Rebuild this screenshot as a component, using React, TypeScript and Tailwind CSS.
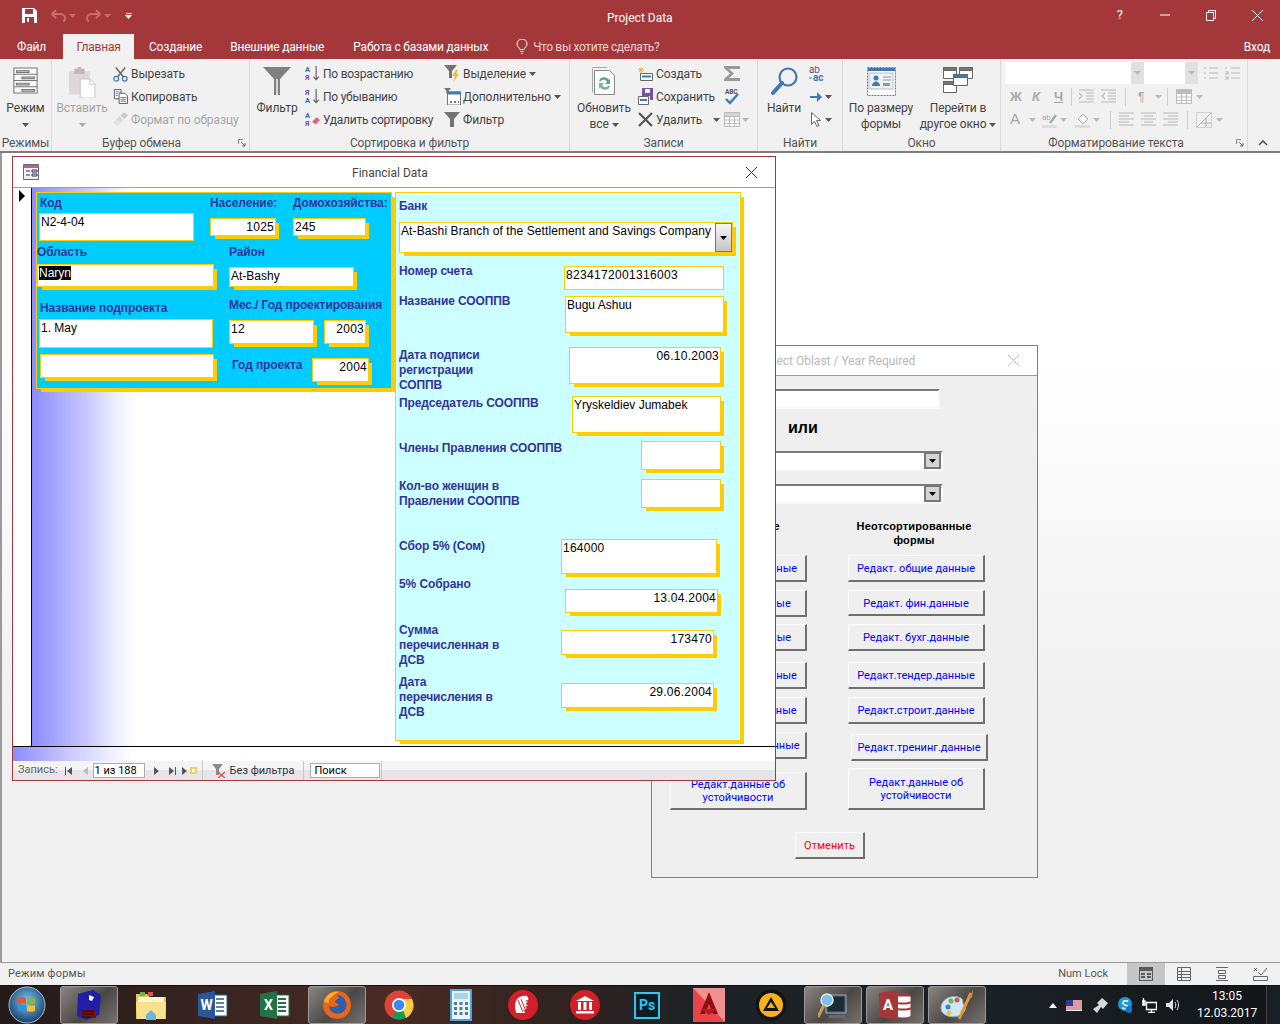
import React from "react";

const SANS = "font-['Roboto',sans-serif]";
const ARIAL = "font-['Liberation_Sans',sans-serif]";

const Caret = ({ c = "#555", cls = "" }: { c?: string; cls?: string }) => (
  <svg width="7" height="4" viewBox="0 0 7 4" className={"inline-block shrink-0 " + cls}>
    <path d="M0 0h7L3.5 4z" fill={c} />
  </svg>
);

/* ribbon icons */
const SaveIcon = () => (
  <svg width="15" height="15" viewBox="0 0 15 15"><path d="M0 0h12l3 3v12H0z" fill="#fff" /><path d="M3 1h8v5H3z" fill="#a4373a" /><path d="M3 9h9v6H3z" fill="#a4373a" /><path d="M5 10h2v4H5z" fill="#fff" /></svg>
);
const UndoIcon = ({ flip = false }: { flip?: boolean }) => (
  <svg width="15" height="13" viewBox="0 0 15 13" style={flip ? { transform: "scaleX(-1)" } : undefined}><path d="M5 1 1 5l4 4M1 5h8c3 0 5 2 5 4s-1 3-2 3" fill="none" stroke="#c26d6f" strokeWidth="2" /></svg>
);
const ModeIcon = () => (
  <svg width="25" height="27" viewBox="0 0 28 30" fill="none" stroke="#777" strokeWidth="1.2"><path d="M1 1h26v28H1z" fill="#fbfbfb" /><path d="M1 8h26M1 15h26M1 22h26" /><path d="M4 4h14v2H4zM10 11h14v2H10zM4 18h14v2H4zM10 25h14v2H10z" fill="#c8c8c8" /></svg>
);
const PasteIcon = () => (
  <svg width="28" height="31" viewBox="0 0 32 36"><path d="M1 5h24v27H1z" fill="#dcd7d8" /><path d="M7 2h12v6H7z" fill="#bdb8b9" /><path d="M11 0h4v3h-4z" fill="#bdb8b9" /><path d="M14 14h11l6 6v16H14z" fill="#fff" stroke="#c4c4c4" /><path d="M25 14v6h6" fill="none" stroke="#c4c4c4" /></svg>
);
const CutIcon = () => (
  <svg width="15" height="16" viewBox="0 0 16 16" fill="none"><path d="M3 1l8 10M13 1 5 11" stroke="#666" strokeWidth="1.5" /><circle cx="3.5" cy="13" r="2.5" stroke="#3f78b5" strokeWidth="1.3" /><circle cx="12.5" cy="13" r="2.5" stroke="#3f78b5" strokeWidth="1.3" /></svg>
);
const CopyIcon = () => (
  <svg width="15" height="15" viewBox="0 0 16 16" fill="#fff" stroke="#555"><path d="M1.5 .5h7v10h-7z" /><path d="M6.5 4.5h6l3 3v8h-9z" /><path d="M3 3h4M3 5h2M3 7h2M8 9h6M8 11h6M8 13h6" stroke="#3f78b5" /></svg>
);
const BrushIcon = () => (
  <svg width="15" height="15" viewBox="0 0 16 15"><path d="m8 3 4-3 4 3-4 4z" fill="#c9c9c9" /><path d="M7 4l4 4-3 3-4-4z" fill="#d8d8d8" /><path d="M4 7l4 4-3 4-5-4z" fill="#e2e2e2" /></svg>
);
const FunnelBig = () => (
  <svg width="28" height="28" viewBox="0 0 28 28"><path d="M0 0h28L17 12v16h-6V12z" fill="#808080" /><path d="M13 12h2v16h-2z" fill="#d6d6d6" /></svg>
);
const FunnelSmall = () => (
  <svg width="16" height="15" viewBox="0 0 16 15"><path d="M0 0h16l-6 7v8H6V7z" fill="#737373" /></svg>
);
const SortIcon = ({ down = false, erase = false }: { down?: boolean; erase?: boolean }) => (
  <svg width="16" height="17" viewBox="0 0 18 19">
    <text x="0" y="8" fontSize="8.5" fontWeight="700" fontFamily="Roboto" fill={down ? "#7a4fa8" : "#2f6eab"}>{down ? "Я" : "А"}</text>
    <text x="0" y="17" fontSize="8.5" fontWeight="700" fontFamily="Roboto" fill={down ? "#2f6eab" : "#7a4fa8"}>{down ? "А" : "Я"}</text>
    {erase ? <path d="m8 12 5-5 4 3-5 5z" fill="#e0607e" /> : <path d="M12.5 1v15M9.5 13l3 3.5 3-3.5" fill="none" stroke="#555" strokeWidth="1.2" />}
  </svg>
);
const HighlightIcon = () => (
  <svg width="16" height="17" viewBox="0 0 16 17"><path d="M0 0h13l-5 6v7H5V6z" fill="#737373" /><path d="m12 5-4 6h3l-2 6 6-8h-3l2-4z" fill="#f0b840" /></svg>
);
const AdvancedIcon = () => (
  <svg width="17" height="17" viewBox="0 0 17 17"><path d="M0 0h7L4.500 3v3h-2V3z" fill="#737373" /><path d="M3.500 4h13v13h-13z" fill="#fff" stroke="#777" /><path d="M3 3.500h14v3H3z" fill="#3f78b5" /><path d="M6 13h2v2H6zM10 13h2v2h-2zM14 13h1v2h-1z" fill="#777" /></svg>
);
const RefreshIcon = () => (
  <svg width="25" height="29" viewBox="0 0 25 29"><path d="M2.500 3.500h15l5 5v19h-20z" fill="#fff" stroke="#888" /><path d="M.5 1.500v24M.5.500h15" stroke="#aaa" fill="none" /><path d="M7 14a5.500 5.500 0 0 1 10-1l1-2v6h-5l2-2a3.500 3.500 0 0 0-6-1z" fill="#5fa783" /><path d="M18 19a5.500 5.500 0 0 1-10 1l-1 2v-6h5l-2 2a3.500 3.500 0 0 0 6 1z" fill="#6fb595" /></svg>
);
const NewRecIcon = () => (
  <svg width="15" height="14" viewBox="0 0 15 14"><path d="M2.500 6.500h12v7h-12z" fill="#fff" stroke="#666" /><path d="M4 8.500h9v2H4z" fill="#3f78b5" /><path d="M3 0v6M0 3h6M1 1l4 4M5 1 1 5" stroke="#e9b648" /></svg>
);
const SaveRecIcon = () => (
  <svg width="15" height="17" viewBox="0 0 15 17"><path d="M4 0h11v12H4z" fill="#7a4fa8" /><path d="M7 1h5v4H7zM7 8h5v4H7z" fill="#fff" /><path d="M.5 8.500h10v8H.5z" fill="#fff" stroke="#666" /><path d="M2 11h7v2H2z" fill="#3f78b5" /></svg>
);
const XIcon = () => (
  <svg width="15" height="15" viewBox="0 0 15 15"><path d="M1 1l13 13M14 1 1 14" stroke="#555" strokeWidth="2.200" /></svg>
);
const SigmaIcon = () => (
  <svg width="16" height="15" viewBox="0 0 16 15"><path d="M0 0h16v3H5l5 4.500L5 12h11v3H0v-2l6-5.500L0 2z" fill="#999" /></svg>
);
const SpellIcon = () => (
  <svg width="16" height="17" viewBox="0 0 16 17"><text x="1" y="6" fontSize="6.500" fontWeight="700" fontFamily="Roboto" fill="#555">ABC</text><path d="m2 11 4 4 8-9" fill="none" stroke="#3f78b5" strokeWidth="2.400" /></svg>
);
const GridIcon = ({ dark = false }: { dark?: boolean }) => (
  <svg width="16" height="15" viewBox="0 0 16 15" fill="#fff" stroke="#bcbcbc"><path d="M.5.500h15v14H.5z" /><path d="M.5.500h15v4H.5z" fill={dark ? "#bcbcbc" : "#d5d5d5"} /><path d="M.5 8h15M.5 11.500h15M5.500 4v11M10.500 4v11" /></svg>
);
const Magnifier = () => (
  <svg width="27" height="29" viewBox="0 0 27 29" fill="none"><circle cx="17" cy="10" r="8.500" stroke="#3f78b5" strokeWidth="2.200" /><path d="M11 16 2 26" stroke="#3f78b5" strokeWidth="4" strokeLinecap="round" /></svg>
);
const ReplaceIcon = () => (
  <svg width="18" height="15" viewBox="0 0 18 15"><text x="1" y="7" fontSize="10" fontFamily="Roboto" fill="#555">a<tspan fill="#7a4fa8">b</tspan></text><text x="5" y="14.500" fontSize="10" fontFamily="Roboto" fontWeight="700" fill="#3f78b5">ac</text><path d="M1 12h3" stroke="#3f78b5" /></svg>
);
const GoIcon = () => (
  <svg width="12" height="10" viewBox="0 0 12 10"><path d="M0 4h7V0l5 5-5 5V6H0z" fill="#3f78b5" /></svg>
);
const CursorIcon = () => (
  <svg width="10" height="15" viewBox="0 0 10 15"><path d="M.5.500v12l3-3 2.500 5 2-1-2.500-5h4z" fill="#fff" stroke="#666" /></svg>
);
const FitIcon = () => (
  <svg width="29" height="29" viewBox="0 0 29 29"><path d="M.5.500h28v28H.5z" fill="#fff" stroke="#777" strokeDasharray="2 1" /><path d="M1 1h27v3H1z" fill="#3f78b5" /><path d="M2 6h24v16H2z" fill="#eef1f5" stroke="#bbb" /><circle cx="9" cy="11" r="2.500" fill="#3f78b5" /><path d="M5 19c0-6 8-6 8 0z" fill="#3f78b5" /><path d="M16 10h8M16 13h8" stroke="#999" /><path d="M16 16h7v3h-7z" fill="#999" /></svg>
);
const SwitchIcon = () => (
  <svg width="30" height="26" viewBox="0 0 30 26" fill="#fff" stroke="#666"><path d="M.5.500h13v11H.5z" /><path d="M16.500.500h13v11h-13z" /><path d="M.5 14.500h13v11H.5z" /><path d="M.5.500h13v3H.5zM16.500.500h13v3h-13zM.5 14.500h13v3H.5z" fill="#777" /><path d="M10.500 7.500h14v11h-14z" /><path d="M10.500 7.500h14v3h-14z" fill="#3f78b5" /></svg>
);

/* formatting icons, all disabled grey */
const Lines = ({ kind }: { kind: "l" | "c" | "r" | "in" | "out" | "bul" | "num" }) => {
  const p: Record<string, string> = {
    l: "M0 1h15M0 4h10M0 7h15M0 10h10M0 13h15",
    c: "M0 1h15M3 4h9M0 7h15M3 10h9M0 13h15",
    r: "M0 1h15M5 4h10M0 7h15M5 10h10M0 13h15",
    in: "M0 1h15M7 4h8M7 7h8M7 10h8M0 13h15M0 4l3 3-3 3",
    out: "M0 1h15M7 4h8M7 7h8M7 10h8M0 13h15M4 4 1 7l3 3",
    bul: "M6 2h9M6 7h9M6 12h9M1 2h2M1 7h2M1 12h2",
    num: "M6 2h9M6 7h9M6 12h9M1 1v2M0 6h3v2H0M0 11h3v2H0",
  };
  return (
    <svg width="16" height="15" viewBox="0 0 16 15"><path d={p[kind]} fill="none" stroke="#b8b8b8" strokeWidth="1.100" /></svg>
  );
};
const Launcher = ({ cls = "" }: { cls?: string }) => (
  <svg width="8" height="8" viewBox="0 0 8 8" className={cls}><path d="M.5 5V.5H5" fill="none" stroke="#888" /><path d="M3 3l4 4M7 4v3H4" fill="none" stroke="#666" /></svg>
);

const Large = ({ cls, icon, dim, children }: { cls: string; icon: React.ReactNode; dim?: boolean; children: React.ReactNode }) => (
  <div className={"flex flex-col items-center shrink-0 mt-[3px] " + cls}>
    <div className="h-[35px] pt-[2px] flex items-start justify-center">{icon}</div>
    <div className={"text-[12px] leading-[16px] text-center whitespace-nowrap " + (dim ? "text-[#a6a6a6]" : "text-[#444]")}>{children}</div>
  </div>
);

const Small = ({ icon, w, dim, caret, children }: { icon: React.ReactNode; w: string; dim?: boolean; caret?: boolean; children: React.ReactNode }) => (
  <div className={"h-[23px] flex items-center text-[12px] whitespace-nowrap " + (dim ? "text-[#a6a6a6]" : "text-[#444]")}>
    <span className={"flex items-center shrink-0 " + w}>{icon}</span>
    {children}
    {caret && <Caret cls="ml-[3px]" />}
  </div>
);

const Group = ({ w, label, launcher, children, labelCls = "" }: { w: string; label: string; launcher?: boolean; children: React.ReactNode; labelCls?: string }) => (
  <div className={"relative h-full shrink-0 flex flex-col border-r border-[#d9d9d9] " + w}>
    <div className="h-[75px] flex pt-[3px]">{children}</div>
    <div className={"h-[17px] pt-[1px] text-[12px] leading-[17px] text-center text-[#555] " + labelCls}>{label}</div>
    {launcher && <Launcher cls="absolute right-[3px] bottom-[4px]" />}
  </div>
);

const Ribbon = () => (
  <div className="h-[94px] bg-[#f1f1f1] flex border-b-2 border-[#7d7d7d] shrink-0 tracking-[-0.1px]">
    <Group w="w-[52px]" label="Режимы">
      <Large cls="w-[51px]" icon={<ModeIcon />}>Режим<br /><Caret /></Large>
    </Group>
    <Group w="w-[198px]" label="Буфер обмена" labelCls="pr-[18px]" launcher>
      <Large cls="w-[56px] ml-[2px]" icon={<PasteIcon />} dim>Вставить<br /><Caret c="#aaa" /></Large>
      <div className="ml-[3px] flex flex-col">
        <Small w="w-[18px]" icon={<CutIcon />}>Вырезать</Small>
        <Small w="w-[18px]" icon={<CopyIcon />}>Копировать</Small>
        <Small w="w-[18px]" icon={<BrushIcon />} dim>Формат по образцу</Small>
      </div>
    </Group>
    <Group w="w-[320px]" label="Сортировка и фильтр">
      <Large cls="w-[50px] ml-[2px]" icon={<FunnelBig />}>Фильтр</Large>
      <div className="ml-[3px] w-[139px] flex flex-col tracking-[-0.25px]">
        <Small w="w-[18px]" icon={<SortIcon />}>По возрастанию</Small>
        <Small w="w-[18px]" icon={<SortIcon down />}>По убыванию</Small>
        <Small w="w-[18px]" icon={<SortIcon erase />}>Удалить сортировку</Small>
      </div>
      <div className="flex flex-col">
        <Small w="w-[19px]" icon={<HighlightIcon />} caret>Выделение</Small>
        <Small w="w-[19px]" icon={<AdvancedIcon />} caret>Дополнительно</Small>
        <Small w="w-[19px]" icon={<FunnelSmall />}>Фильтр</Small>
      </div>
    </Group>
    <Group w="w-[188px]" label="Записи">
      <Large cls="w-[60px] ml-[4px]" icon={<RefreshIcon />}>Обновить<br />все <Caret cls="align-middle" /></Large>
      <div className="ml-[4px] w-[86px] flex flex-col">
        <Small w="w-[18px]" icon={<NewRecIcon />}>Создать</Small>
        <Small w="w-[18px]" icon={<SaveRecIcon />}>Сохранить</Small>
        <Small w="w-[18px]" icon={<XIcon />}>Удалить<Caret cls="ml-[11px]" /></Small>
      </div>
      <div className="flex flex-col w-[30px]">
        <div className="h-[23px] flex items-center"><SigmaIcon /></div>
        <div className="h-[23px] flex items-center"><SpellIcon /></div>
        <div className="h-[23px] flex items-center gap-[2px]"><GridIcon /><Caret c="#b5b5b5" /></div>
      </div>
    </Group>
    <Group w="w-[85px]" label="Найти">
      <Large cls="w-[40px] ml-[6px]" icon={<Magnifier />}>Найти</Large>
      <div className="ml-[4px] flex flex-col">
        <div className="h-[23px] flex items-center"><ReplaceIcon /></div>
        <div className="h-[23px] flex items-center gap-[3px] pl-[2px]"><GoIcon /><Caret /></div>
        <div className="h-[23px] flex items-center gap-[4px] pl-[3px]"><CursorIcon /><Caret /></div>
      </div>
    </Group>
    <Group w="w-[158px]" label="Окно">
      <Large cls="w-[68px] ml-[4px]" icon={<FitIcon />}>По размеру<br />формы</Large>
      <Large cls="w-[80px] ml-[3px]" icon={<SwitchIcon />}>Перейти в<br />другое окно <Caret cls="align-middle" /></Large>
    </Group>
    <Group w="w-[247px]" label="Форматирование текста" labelCls="pr-[16px]" launcher>
      <div className="ml-[4px] flex flex-col">
        <div className="flex items-center h-[22px]">
          <div className="w-[126px] h-[22px] bg-white" />
          <div className="w-[13px] h-[22px] bg-[#e0e0e0] flex items-center justify-center"><Caret c="#bbb" /></div>
          <div className="w-[41px] h-[22px] bg-white" />
          <div className="w-[13px] h-[22px] bg-[#e0e0e0] flex items-center justify-center"><Caret c="#bbb" /></div>
          <div className="ml-[5px] mr-[5px]"><Lines kind="bul" /></div>
          <div className="ml-[1px]"><Lines kind="num" /></div>
        </div>
        <div className={"flex items-center h-[23px] mt-[1px] text-[#a8a8a8] text-[13px] font-bold " + ARIAL}>
          <span className="ml-[5px] w-[22px]">Ж</span>
          <span className="w-[22px] italic">К</span>
          <span className="w-[17px] underline">Ч</span>
          <span className="w-[1px] h-[18px] bg-[#d0d0d0] mr-[7px]" />
          <Lines kind="in" /><span className="w-[6px]" /><Lines kind="out" />
          <span className="w-[1px] h-[18px] bg-[#d0d0d0] mx-[8px]" />
          <span className="ml-[4px] w-[17px] font-normal text-[12px]">¶</span><Caret c="#bbb" />
          <span className="w-[1px] h-[18px] bg-[#d0d0d0] ml-[5px] mr-[8px]" />
          <GridIcon dark /><Caret c="#bbb" cls="ml-[4px]" />
        </div>
        <div className={"flex items-center h-[23px] text-[#a8a8a8] text-[15px] " + ARIAL}>
          <span className="ml-[5px] w-[19px]">A</span><Caret c="#bbb" />
          <span className="w-[6px]" />
          <svg width="16" height="16" viewBox="0 0 16 16"><text x="0" y="8" fontSize="8" fontFamily="Roboto" fill="#aaa">ab</text><path d="m8 11 6-8" stroke="#aaa" strokeWidth="2.500" /><path d="M0 13h15v3H0z" fill="#ddd" /></svg>
          <Caret c="#bbb" cls="ml-[2px]" />
          <span className="w-[8px]" />
          <svg width="16" height="16" viewBox="0 0 16 16"><path d="m3 7 5-5 5 5-5 5z" fill="#f8f8f8" stroke="#aaa" /><path d="M0 13h15v3H0z" fill="#ddd" /></svg>
          <Caret c="#bbb" cls="ml-[2px]" />
          <span className="w-[1px] h-[18px] bg-[#d0d0d0] ml-[10px] mr-[8px]" />
          <Lines kind="l" /><span className="w-[6px]" /><Lines kind="c" /><span className="w-[6px]" /><Lines kind="r" />
          <span className="w-[1px] h-[18px] bg-[#d0d0d0] mx-[8px]" />
          <svg width="16" height="16" viewBox="0 0 16 16" fill="none" stroke="#b0b0b0"><path d="M.5.500h15v15H.5z" strokeDasharray="1 1" /><path d="M15 1 1 15M10 6v9M5 11h10" /></svg>
          <Caret c="#bbb" cls="ml-[4px]" />
        </div>
      </div>
    </Group>
    <div className="flex-1 flex items-end justify-center pb-[5px] pr-[2px]">
      <svg width="10" height="6" viewBox="0 0 10 6"><path d="M1 5l4-4 4 4" fill="none" stroke="#555" strokeWidth="1.600" /></svg>
    </div>
  </div>
);

const Header = () => (
  <div className="shrink-0 bg-[#a4373a] text-white">
    <div className="h-[34px] flex items-center relative">
      <div className="ml-[22px] -mt-[3px]"><SaveIcon /></div>
      <div className="ml-[14px] -mt-[3px] flex items-center gap-[3px]"><UndoIcon /><Caret c="#c26d6f" /></div>
      <div className="ml-[10px] -mt-[3px] flex items-center gap-[3px]"><UndoIcon flip /><Caret c="#c26d6f" /></div>
      <div className="ml-[14px] -mt-[3px] flex flex-col items-center gap-[1px]"><div className="w-[6px] h-[1px] bg-white" /><Caret c="#fff" /></div>
      <div className="ml-[475px] mt-[2px] w-[60px] whitespace-nowrap text-[12px] text-center">Project Data</div>
      <div className="ml-auto flex items-center -mt-[4px] mr-[17px]">
        <span className="text-[13px]">?</span>
        <svg className="ml-[37px]" width="10" height="2" viewBox="0 0 10 2"><path d="M0 1h10" stroke="#fff" /></svg>
        <svg className="ml-[36px]" width="10" height="11" viewBox="0 0 10 11" fill="none" stroke="#fff"><path d="M.5 2.500h7v8h-7zM2.500 2.500v-2h7v8h-2" /></svg>
        <svg className="ml-[36px]" width="11" height="11" viewBox="0 0 11 11" stroke="#fff"><path d="M0 0l11 11M11 0 0 11" /></svg>
      </div>
    </div>
    <div className="h-[25px] flex items-stretch text-[12px] whitespace-nowrap tracking-[-0.2px]">
      <div className="w-[63px] flex items-center justify-center pt-[1px]">Файл</div>
      <div className="w-[71px] flex items-center justify-center bg-[#f1f1f1] text-[#a4373a]">Главная</div>
      <div className="ml-[15px] flex items-center">Создание</div>
      <div className="ml-[28px] flex items-center">Внешние данные</div>
      <div className="ml-[29px] flex items-center">Работа с базами данных</div>
      <div className="ml-[28px] flex items-center">
        <svg width="12" height="15" viewBox="0 0 12 15" fill="none" stroke="#fff"><path d="M4 10.500C3 8 1 7.500 1 5a5 5 0 0 1 10 0c0 2.500-2 3-3 5.500zM4.500 12.500h3M5 14.500h2" /></svg>
        <span className="ml-[5px] text-[#ecd2d3] tracking-[-0.35px]">Что вы хотите сделать?</span>
      </div>
      <div className="ml-auto mr-[10px] flex items-center">Вход</div>
    </div>
  </div>
);

/* form controls */
const SHADOW = "shadow-[4px_4px_0_-1px_#ffcc00]";
const DIGITS = "tracking-[0.25px] ";

const Label = ({ cls = "", children }: { cls?: string; children: React.ReactNode }) => (
  <div className={"text-[12px] font-bold leading-[15px] text-[#333399] whitespace-nowrap tracking-[-0.1px] translate-y-[1px] " + ARIAL + " " + cls}>{children}</div>
);

const Field = ({ cls, value, right, flat, sel }: { cls: string; value?: string; right?: boolean; flat?: boolean; sel?: boolean }) => (
  <div className={"shrink-0 bg-white border border-[#ffcc00] text-[12px] leading-[15px] text-black px-[1px] pt-[1px] whitespace-nowrap overflow-hidden " + ARIAL + " " + (right ? "text-right " : "") + (flat ? "" : SHADOW + " ") + cls}>
    {sel ? <span className="bg-black text-white">{value}</span> : value}
  </div>
);

const LeftPanel = () => (
  <div className={"w-[356px] h-[197px] shrink-0 bg-[#00ccff] border border-[#ffcc00] " + SHADOW}>
    <div className="flex h-[50px]">
      <div className="ml-[2px] w-[155px]">
        <Label cls="ml-[1px] mt-[2px]">Код</Label>
        <Field cls="mt-[3px] w-[155px] h-[28px]" value="N2-4-04" flat />
      </div>
      <div className="ml-[16px] w-[66px]">
        <Label cls="mt-[2px]">Население:</Label>
        <Field cls={DIGITS + "mt-[8px] w-[66px] h-[18px]"} value="1025" right />
      </div>
      <div className="ml-[17px] w-[73px]">
        <Label cls="mt-[2px]">Домохозяйства:</Label>
        <Field cls={DIGITS + "mt-[8px] w-[73px] h-[18px]"} value="245" />
      </div>
    </div>
    <div className="flex mt-[1px]">
      <div className="w-[177px]">
        <Label>Область</Label>
        <Field cls="mt-[5px] w-[177px] h-[23px]" value="Naryn" sel />
      </div>
      <div className="ml-[15px] w-[125px]">
        <Label>Район</Label>
        <Field cls="mt-[8px] w-[125px] h-[20px]" value="At-Bashy" />
      </div>
    </div>
    <div className="flex mt-[10px]">
      <div className="ml-[2px] w-[174px]">
        <Label cls="ml-[1px] mt-[3px]">Название подпроекта</Label>
        <Field cls="mt-[4px] w-[174px] h-[29px]" value="1. May" flat />
      </div>
      <div className="ml-[16px]">
        <Label>Мес./ Год проектирования</Label>
        <div className="flex mt-[8px]">
          <Field cls={DIGITS + "w-[85px] h-[24px]"} value="12" />
          <Field cls={DIGITS + "ml-[10px] w-[42px] h-[24px]"} value="2003" right />
        </div>
      </div>
    </div>
    <div className="flex mt-[6px]">
      <Field cls="ml-[3px] w-[174px] h-[24px]" />
      <Label cls="ml-[18px] w-[80px] mt-[3px]">Год проекта</Label>
      <Field cls={DIGITS + "mt-[4px] w-[57px] h-[24px]"} value="2004" right />
    </div>
  </div>
);

const Row = ({ cls, label, labelW, children }: { cls: string; label: React.ReactNode; labelW: string; children: React.ReactNode }) => (
  <div className={"flex items-start ml-[3px] " + cls}>
    <Label cls={"shrink-0 " + labelW}>{label}</Label>
    {children}
  </div>
);

const RightPanel = () => (
  <div className={"ml-[3px] w-[346px] h-[549px] shrink-0 bg-[#ccffff] border border-[#ffcc00] " + SHADOW}>
    <Label cls="ml-[3px] mt-[5px]">Банк</Label>
    <div className={"relative ml-[3px] mt-[9px] w-[334px] h-[31px] bg-white border border-[#ffcc00] text-[12px] leading-[15px] px-[1px] pt-[1px] whitespace-nowrap tracking-[0.1px] " + ARIAL + " " + SHADOW}>
      At-Bashi Branch of the Settlement and Savings Company
      <div className="absolute right-[0px] top-[0px] w-[17px] h-[29px] border border-[#777] bg-[linear-gradient(#f6f6f6,#c4c4c4)] flex items-center justify-center"><Caret c="#000" /></div>
    </div>
    <Row cls="mt-[10px]" labelW="w-[165px]" label="Номер счета">
      <Field cls={"mt-[3px] w-[160px] h-[24px] tracking-[0.33px]"} value="8234172001316003" flat />
    </Row>
    <Row cls="mt-[3px]" labelW="w-[166px]" label="Название СООППВ">
      <Field cls="mt-[3px] w-[159px] h-[37px]" value="Bugu Ashuu" />
    </Row>
    <Row cls="mt-[14px]" labelW="w-[170px]" label={<>Дата подписи<br />регистрации<br />СОППВ</>}>
      <Field cls={DIGITS + "w-[152px] h-[37px]"} value="06.10.2003" right />
    </Row>
    <Row cls="mt-[3px]" labelW="w-[173px]" label="Председатель СООППВ">
      <Field cls="mt-[1px] w-[149px] h-[37px]" value="Yryskeldiev Jumabek" />
    </Row>
    <Row cls="mt-[7px]" labelW="w-[242px]" label="Члены Правления СООППВ">
      <Field cls="mt-[1px] w-[80px] h-[29px]" />
    </Row>
    <Row cls="mt-[8px]" labelW="w-[242px]" label={<>Кол-во женщин в<br />Правлении СООППВ</>}>
      <Field cls="mt-[1px] w-[80px] h-[29px]" />
    </Row>
    <Row cls="mt-[30px]" labelW="w-[162px]" label="Сбор 5% (Сом)">
      <Field cls={DIGITS + "mt-[1px] w-[156px] h-[35px]"} value="164000" />
    </Row>
    <Row cls="mt-[2px]" labelW="w-[166px]" label="5% Собрано">
      <Field cls={DIGITS + "mt-[13px] w-[153px] h-[24px]"} value="13.04.2004" right />
    </Row>
    <Row cls="mt-[9px]" labelW="w-[162px]" label={<>Сумма<br />перечисленная в<br />ДСВ</>}>
      <Field cls={DIGITS + "mt-[8px] w-[153px] h-[25px]"} value="173470" right />
    </Row>
    <Row cls="mt-[7px]" labelW="w-[162px]" label={<>Дата<br />перечисления в<br />ДСВ</>}>
      <Field cls={DIGITS + "mt-[9px] w-[153px] h-[25px]"} value="29.06.2004" right />
    </Row>
  </div>
);

const NavGlyph = ({ d, c = "#555" }: { d: string; c?: string }) => (
  <svg width="8" height="8" viewBox="0 0 8 8"><path d={d} fill={c} /></svg>
);

const NavBar = () => (
  <div className={"h-[19px] shrink-0 flex items-center text-[11px] text-[#333] bg-[linear-gradient(#f4f4f6_50%,#e6e6ea_50%)] whitespace-nowrap " + SANS}>
    <span className="ml-[5px] text-[#666]">Запись:</span>
    <span className="ml-[7px]"><NavGlyph d="M0 0h1v8H0zM7 0v8L2 4z" /></span>
    <span className="ml-[9px]"><NavGlyph d="M6 0v8L1 4z" c="#bbb" /></span>
    <div className="ml-[3px] w-[52px] h-[15px] bg-white border border-[#adadad] leading-[13px] pl-[1px] text-black">1 из 188</div>
    <span className="ml-[7px]"><NavGlyph d="M2 0v8l5-4z" /></span>
    <span className="ml-[9px]"><NavGlyph d="M0 0v8l5-4zM6 0h1v8H6z" /></span>
    <span className="ml-[5px] flex items-center"><NavGlyph d="M0 0v8l5-4z" /><svg width="7" height="7" viewBox="0 0 7 7"><path d="M0 0h7v7H0z" fill="#f0d060" /><path d="M2 2h3v3H2z" fill="#fff" /></svg></span>
    <span className="ml-[5px] w-[1px] h-[19px] bg-[#c8c8c8]" />
    <svg className="ml-[9px]" width="15" height="14" viewBox="0 0 15 14"><path d="M0 0h11L7 5v6H4V5z" fill="#8a8a8a" /><path d="m6 8 7 6M13 8l-7 6" stroke="#d9534f" strokeWidth="1.300" /></svg>
    <span className="ml-[3px] mt-[1px]">Без фильтра</span>
    <span className="ml-[9px] w-[1px] h-[19px] bg-[#c8c8c8]" />
    <div className="ml-[6px] w-[70px] h-[15px] bg-white border border-[#adadad] leading-[13px] pl-[3px] text-black">Поиск</div>
    <span className="ml-[1px] w-[1px] h-[19px] bg-[#c8c8c8]" />
  </div>
);

const GRADIENT = "bg-[linear-gradient(90deg,#8c8cff_0px,#c8c8ff_55px,#f0f0ff_85px,#ffffff_105px)]";

const FormWindow = () => (
  <div className="absolute left-[10px] top-[3px] w-[764px] h-[625px] bg-white border border-[#a4373a] flex flex-col">
    <div className="h-[31px] shrink-0 border-b border-[#a0a0a0] flex items-center relative">
      <svg className="ml-[10px]" width="16" height="16" viewBox="0 0 16 16"><path d="M.5.500h15v15H.5z" fill="#eef1f8" stroke="#667" /><path d="M1 1h14v3H1z" fill="#c0607a" /><path d="M3 7h4M3 11h4" stroke="#335" /><path d="M9 6h5v2H9zM9 10h5v2H9z" fill="none" stroke="#335" /></svg>
      <span className={"ml-[313px] mt-[1px] text-[12px] text-[#444] " + SANS}>Financial Data</span>
      <svg className="ml-auto mr-[18px]" width="11" height="11" viewBox="0 0 11 11" stroke="#333"><path d="M0 0l11 11M11 0 0 11" /></svg>
    </div>
    <div className="h-[558px] shrink-0 flex">
      <div className="w-[19px] shrink-0 border-r border-black pl-[5px] pt-[2px]">
        <svg width="8" height="12" viewBox="0 0 8 12"><path d="M1 0l6 6-6 6z" fill="#000" /></svg>
      </div>
      <div className={"flex-1 flex items-start pl-[4px] pt-[4px] " + GRADIENT}>
        <LeftPanel />
        <RightPanel />
      </div>
    </div>
    <div className="h-[15px] shrink-0 border-t border-black bg-[linear-gradient(90deg,#8c8cff_0px,#c8c8ff_55px,#f0f0ff_100px,#ffffff_120px)]" />
    <NavBar />
  </div>
);

/* the dialog behind the form */
const DlgButton = ({ cls, red, children }: { cls: string; red?: boolean; children: React.ReactNode }) => (
  <div className={"shrink-0 flex items-center justify-center text-center bg-[#efefef] border-t border-l border-t-white border-l-white border-b-2 border-r-2 border-b-[#6f6f6f] border-r-[#6f6f6f] text-[11px] leading-[13px] pt-[1px] " + (red ? "text-[#ff0000] " : "text-[#0000ff] ") + SANS + " " + cls}>
    {children}
  </div>
);

const Sunken = ({ cls, combo }: { cls: string; combo?: boolean }) => (
  <div className={"h-[20px] bg-white border-t-2 border-l-2 border-t-[#7a7a7a] border-l-[#7a7a7a] border-b-2 border-r-2 border-b-[#f8f8f8] border-r-[#f8f8f8] flex justify-end " + cls}>
    {combo && <div className="w-[17px] h-[17px] -mt-[1px] border-2 border-[#777] bg-[#d4d4d4] flex items-center justify-center"><Caret c="#000" /></div>}
  </div>
);

const Dialog = () => (
  <div className="absolute left-[649px] top-[192px] w-[387px] h-[533px] border border-[#808080] bg-[#efefef] flex flex-col">
    <div className="h-[30px] shrink-0 bg-white border-b border-[#9a9a9a] flex items-center relative">
      <span className={"ml-[108px] text-[12px] text-[#b8b8b8] whitespace-nowrap " + SANS}>Select Oblast / Year Required</span>
      <svg className="ml-auto mr-[18px]" width="11" height="11" viewBox="0 0 11 11" stroke="#c4c4c4"><path d="M0 0l11 11M11 0 0 11" /></svg>
    </div>
    <Sunken cls="mt-[13px] ml-[18px] w-[270px]" />
    <div className={"mt-[8px] ml-[136px] h-[22px] text-[16px] leading-[22px] font-bold text-black " + ARIAL}>или</div>
    <Sunken cls="mt-[12px] ml-[18px] w-[273px]" combo />
    <Sunken cls="mt-[13px] ml-[18px] w-[273px]" combo />
    <div className={"mt-[15px] flex text-[11px] leading-[14px] font-bold text-black text-center " + ARIAL}>
      <div className="ml-[18px] w-[137px] pr-[6px]">Сортированные<br />формы</div>
      <div className="ml-[41px] w-[137px] whitespace-nowrap pr-[5px] tracking-[0.15px]">Неотсортированные<br />формы</div>
    </div>
    <div className="mt-[8px] flex">
      <div className="ml-[18px] w-[137px] flex flex-col">
        <DlgButton cls="w-[137px] h-[27px]">Редакт. общие данные</DlgButton>
        <DlgButton cls="mt-[8px] w-[137px] h-[27px]">Редакт. фин.данные</DlgButton>
        <DlgButton cls="mt-[7px] w-[137px] h-[27px]">Редакт. бухг.данные</DlgButton>
        <DlgButton cls="mt-[11px] w-[137px] h-[27px]">Редакт.тендер.данные</DlgButton>
        <DlgButton cls="mt-[8px] w-[137px] h-[27px]">Редакт.строит.данные</DlgButton>
        <DlgButton cls="mt-[8px] w-[137px] h-[27px]">Редакт.тренинг.данные</DlgButton>
        <DlgButton cls="mt-[13px] w-[137px] h-[38px]">Редакт.данные об<br />устойчивости</DlgButton>
      </div>
      <div className="ml-[41px] w-[140px] flex flex-col">
        <DlgButton cls="w-[137px] h-[27px]">Редакт. общие данные</DlgButton>
        <DlgButton cls="mt-[8px] w-[137px] h-[26px]">Редакт. фин.данные</DlgButton>
        <DlgButton cls="mt-[8px] w-[137px] h-[27px]">Редакт. бухг.данные</DlgButton>
        <DlgButton cls="mt-[11px] w-[137px] h-[27px]">Редакт.тендер.данные</DlgButton>
        <DlgButton cls="mt-[8px] w-[137px] h-[27px]">Редакт.строит.данные</DlgButton>
        <DlgButton cls="mt-[10px] ml-[3px] w-[137px] h-[27px]">Редакт.тренинг.данные</DlgButton>
        <DlgButton cls="mt-[7px] w-[137px] h-[42px]">Редакт.данные об<br />устойчивости</DlgButton>
      </div>
    </div>
    <DlgButton cls="mt-[22px] ml-[143px] w-[70px] h-[27px]" red>Отменить</DlgButton>
  </div>
);

const StatusBar = () => (
  <div className={"h-[23px] shrink-0 bg-[#f1f1f1] border-t border-[#9a9a9a] flex items-center text-[11px] text-[#555] " + SANS}>
    <span className="ml-[8px] tracking-[0.2px]">Режим формы</span>
    <span className="ml-auto mr-[19px]">Num Lock</span>
    <div className="h-full w-[38px] bg-[#c6c6c6] flex items-center justify-center">
      <svg width="14" height="14" viewBox="0 0 14 14"><path d="M0 0h14v14H0z" fill="#5a5a5a" /><path d="M1 4h12v9H1z" fill="#c6c6c6" /><path d="M2 6h4v2H2zM8 6h4v2H8zM2 9h4v2H2zM8 9h4v2H8z" fill="#5a5a5a" /></svg>
    </div>
    <div className="w-[38px] flex justify-center">
      <svg width="14" height="14" viewBox="0 0 14 14" fill="none" stroke="#666"><path d="M.5.500h13v13H.5zM.5 4.500h13M.5 7.500h13M.5 10.500h13M4.500.500v13" /></svg>
    </div>
    <div className="w-[38px] flex justify-center">
      <svg width="12" height="14" viewBox="0 0 12 14" fill="none" stroke="#666"><path d="M0 .500h12M0 13.500h12M2.500 3.500h7v3h-7zM2.500 8.500h7v3h-7z" /></svg>
    </div>
    <div className="w-[38px] mr-[1px] flex justify-center">
      <svg width="15" height="14" viewBox="0 0 15 14" fill="none" stroke="#666"><path d="M.5 9.500h14v4H.5zM1 1l3 3M1 4l3-3M5 5l3 3 6-7" /></svg>
    </div>
  </div>
);

/* taskbar */
const tb: { icon: React.ReactNode; active?: boolean }[] = [
  { active: true, icon: <svg width="28" height="32" viewBox="0 0 28 32"><path d="M3 5 18 1l8 5-2 20-13 5-9-4z" fill="#1f1fa8" /><path d="M7 20h14v9H7z" fill="#7a1010" /><path d="M7 22h12M7 25h12M7 28h10" stroke="#111" /><path d="M14 6l5 2-2 4-3-1z" fill="#fff" /></svg> },
  { icon: <svg width="32" height="32" viewBox="0 0 32 32"><path d="M1 5h11l3 3h16v22H1z" fill="#e6c25e" /><path d="M3 8h26v8H3z" fill="#fff5c6" /><path d="M1 13h30l-1 17H2z" fill="#f7e08e" /><path d="M5 3h5v4H5z" fill="#69b74a" /><path d="M13 3h5v4h-5z" fill="#d9584a" /><path d="M11 26l5-5 5 5v5H11z" fill="#6fb4e0" /></svg> },
  { icon: <svg width="30" height="28" viewBox="0 0 30 28"><path d="M10 4h19v21H10z" fill="#fff" stroke="#2b579a" /><path d="M18 8h8M18 12h8M18 16h8M18 20h8" stroke="#2b579a" strokeWidth="1.500" /><path d="M0 3 17 0v28L0 25z" fill="#2b579a" /><text x="2.500" y="19" fontSize="14" fontWeight="700" fontFamily="Roboto" fill="#fff">W</text></svg> },
  { icon: <svg width="30" height="28" viewBox="0 0 30 28"><path d="M10 4h19v21H10z" fill="#fff" stroke="#217346" /><path d="M18 8h8M18 12h8M18 16h8M18 20h8" stroke="#217346" strokeWidth="2" /><path d="M0 3 17 0v28L0 25z" fill="#217346" /><text x="4" y="19" fontSize="14" fontWeight="700" fontFamily="Roboto" fill="#fff">X</text></svg> },
  { active: true, icon: <svg width="30" height="30" viewBox="0 0 30 30"><circle cx="15" cy="15" r="14" fill="#e8661c" /><path d="M15 5a10 10 0 0 1 9 13c-2 5-8 7-12 5-3-1-5-4-5-7 3 2 9 1 10-2-2 0-4-1-4-3l4-3z" fill="#2f5fa8" /><path d="M2 12C4 5 10 1 17 2c-3 1-6 3-7 5-2 1-4 3-3 6z" fill="#f7b231" /></svg> },
  { icon: <svg width="30" height="30" viewBox="0 0 30 30"><circle cx="15" cy="15" r="14.500" fill="#db4437" /><path d="M15 15 27.500 22A14.500 14.500 0 0 1 8 27.700z" fill="#0f9d58" /><path d="M15 9h13a14.500 14.500 0 0 1-6 19z" fill="#ffcd40" /><circle cx="15" cy="15" r="7" fill="#fff" /><circle cx="15" cy="15" r="5.300" fill="#4285f4" /></svg> },
  { icon: <svg width="22" height="32" viewBox="0 0 22 32"><path d="M0 0h22v32H0z" fill="#4ea3d8" /><path d="M2 2h18v28H2z" fill="#e8f3fb" /><path d="M4 4h14v6H4z" fill="#a8d4ee" /><path d="M4 13h3v3H4zM9.500 13h3v3h-3zM15 13h3v3h-3zM4 18h3v3H4zM9.500 18h3v3h-3zM15 18h3v3h-3zM4 23h3v3H4zM9.500 23h3v3h-3zM15 23h3v3h-3z" fill="#5d7b8e" /></svg> },
  { icon: <svg width="30" height="30" viewBox="0 0 30 30"><circle cx="15" cy="15" r="15" fill="#d31f2a" /><path d="M8 23c0-2-1-4-1-7C7 9 12 5 19 6c1 1 2 3 1 4l-3 1 3 1-3 2 3 1-3 2 2 1-3 2 1 3z" fill="#fff" /><path d="M10 10l5 12M13 9l4 10" stroke="#d31f2a" /></svg> },
  { icon: <svg width="30" height="30" viewBox="0 0 30 30"><circle cx="15" cy="15" r="15" fill="#d31f2a" /><path d="M15 6l9 5H6zM8 12h3v8H8zM13.500 12h3v8h-3zM19 12h3v8h-3zM6 21h18v2.500H6z" fill="#fff" /></svg> },
  { icon: <div className="w-[26px] h-[27px] bg-[#061e26] border-2 border-[#31c5f0] text-[#31c5f0] text-[14px] font-bold leading-[22px] text-center font-['Roboto',sans-serif]">Ps</div> },
  { icon: <svg width="32" height="34" viewBox="0 0 32 34"><path d="M0 0h32v34H0z" fill="#e8444a" /><path d="M0 0h32v34z" fill="#f09090" /><path d="M16 4 7 26h5l4-10 4 10h5z" fill="#8d1015" /><path d="M8 21h16l-8 6z" fill="#b8181e" /></svg> },
  { icon: <svg width="32" height="32" viewBox="0 0 32 32"><circle cx="16" cy="16" r="15.500" fill="#141414" /><circle cx="16" cy="16" r="12" fill="#f5b21a" /><path d="M16 8 8 22h16zM16 13l4 6h-8z" fill="#141414" fillRule="evenodd" /></svg> },
  { active: true, icon: <svg width="30" height="30" viewBox="0 0 30 30"><path d="M8 5h20v18H8z" fill="#3a4c58" stroke="#aac" /><path d="M10 7h16v14H10z" fill="#1c2a33" /><circle cx="9" cy="10" r="6" fill="#7ec0e8" stroke="#dfe8ee" strokeWidth="1.500" /><path d="M6 15 0 27" stroke="#c8a04c" strokeWidth="3" /><path d="M12 25h14l2 3H10z" fill="#667" /></svg> },
  { active: true, icon: <svg width="32" height="30" viewBox="0 0 32 30"><ellipse cx="24" cy="6" rx="8" ry="3" fill="#a4373a" /><path d="M16 6h16v19c0 2-3 3-8 3s-8-1-8-3z" fill="#fff" stroke="#a4373a" /><path d="M16 12c2 2 14 2 16 0M16 18c2 2 14 2 16 0" fill="none" stroke="#a4373a" strokeWidth="2" /><path d="M0 3 19 0v30L0 27z" fill="#a4373a" /><text x="4" y="20" fontSize="15" fontWeight="700" fontFamily="Roboto" fill="#fff">A</text></svg> },
  { active: true, icon: <svg width="34" height="32" viewBox="0 0 34 32"><path d="M1 18C2 9 13 5 21 9c3 2 1 5 3 7s2 6-2 9c-8 6-22 2-21-7z" fill="#cfe6f5" stroke="#8ab" /><circle cx="8" cy="18" r="2.500" fill="#3a7fc8" /><circle cx="11" cy="12" r="2.500" fill="#6bb84a" /><circle cx="17" cy="11" r="2.500" fill="#d9534f" /><circle cx="9" cy="24" r="2.500" fill="#f0c040" /><path d="M19 30 31 4" stroke="#e09a30" strokeWidth="3" /><path d="M29 8l4-7-1 8z" fill="#c48b3a" /></svg> },
];

const Taskbar = () => (
  <div className="relative h-[39px] shrink-0 flex items-center border-t border-[#101010] bg-[linear-gradient(90deg,#241a19_0%,#3a2521_18%,#4a2b24_30%,#33231f_42%,#1e2226_55%,#1b2227_75%,#12161a_100%)] overflow-hidden">
    <div className="w-[60px] shrink-0 flex pl-[8px]">
      <svg width="38" height="38" viewBox="0 0 38 38">
        <defs><radialGradient id="orb" cx="50%" cy="40%" r="60%"><stop offset="0" stopColor="#7cc8f0" /><stop offset="1" stopColor="#17406f" /></radialGradient></defs>
        <circle cx="19" cy="19" r="18" fill="url(#orb)" stroke="#a8c0d0" />
        <path d="M10 12c3-1 5-1 8 0v6c-3-1-5-1-8 0z" fill="#e8552b" />
        <path d="M19 12c3 1 5 1 8 0v6c-3 1-5 1-8 0z" fill="#7fba3a" />
        <path d="M10 19c3-1 5-1 8 0v6c-3-1-5-1-8 0z" fill="#2a97e0" />
        <path d="M19 19c3 1 5 1 8 0v6c-3 1-5 1-8 0z" fill="#f5c02e" />
      </svg>
    </div>
    <div className="flex gap-[4px]">
      {tb.map((t, i) => (
        <div key={i} className={"w-[58px] h-[38px] shrink-0 flex items-center justify-center rounded-[3px] " + (t.active ? "border border-[#9a9a9a] bg-[linear-gradient(135deg,#8a8580,#4a4745_55%,#77726e)]" : "")}>
          {t.icon}
        </div>
      ))}
    </div>
    <div className={"ml-[63px] flex items-center text-white " + SANS}>
      <svg width="8" height="5" viewBox="0 0 8 5"><path d="M0 5l4-5 4 5z" fill="#fff" /></svg>
      <svg className="ml-[9px]" width="16" height="11" viewBox="0 0 16 11"><path d="M0 0h16v11H0z" fill="#fff" /><path d="M0 1h16M0 3h16M0 5h16M0 7h16M0 9h16" stroke="#c8303a" /><path d="M0 0h7v6H0z" fill="#2d3f8e" /></svg>
      <svg className="ml-[11px]" width="15" height="15" viewBox="0 0 15 15"><path d="M9 0l6 5-5 6-2-2-4 6-4-4 6-4-2-2z" fill="#d8d8d8" /></svg>
      <svg className="ml-[10px]" width="14" height="16" viewBox="0 0 14 16"><circle cx="7" cy="7" r="7" fill="#1b9ad6" /><path d="M10 4.500C8 3 4 4 5 6.500s5 1 4.500 3.500-4 2-5 .5" fill="none" stroke="#fff" strokeWidth="1.600" /><circle cx="11" cy="12.500" r="3.500" fill="#1e6fc8" /></svg>
      <svg className="ml-[10px]" width="15" height="15" viewBox="0 0 15 15" fill="none" stroke="#fff" strokeWidth="1.300"><path d="M4.500 4.500h10v7h-10zM9.500 11.500v3M6 14.500h7M1.500 0v7M0 3h3v4H0z" /></svg>
      <svg className="ml-[9px]" width="14" height="14" viewBox="0 0 14 14"><path d="M0 5h3l4-4v12l-4-4H0z" fill="#e0e0e0" /><path d="M9 4c1 2 1 4 0 6M11 2c2 3 2 7 0 10" fill="none" stroke="#e0e0e0" /></svg>
      <div className="ml-[17px] w-[60px] text-center text-[12px] leading-[17px]">13:05<br />12.03.2017</div>
    </div>
    <div className="absolute right-0 top-0 w-[14px] h-full border-l border-[#444] bg-[#1a1f23]" />
  </div>
);

export default function App() {
  return (
    <div className={"relative w-[1280px] h-[1024px] overflow-hidden flex flex-col " + SANS}>
      <Header />
      <Ribbon />
      <div className="relative flex-1 border-l-2 border-[#9a9a9a] bg-[linear-gradient(#ffffff_25%,#f0f0f0_70%)]">
        <Dialog />
        <FormWindow />
      </div>
      <StatusBar />
      <Taskbar />
    </div>
  );
}
